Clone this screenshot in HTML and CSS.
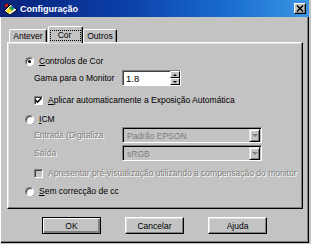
FILE: index.html
```html
<!DOCTYPE html>
<html lang="pt">
<head>
    <meta charset="UTF-8">
    <title>Configuração</title>
    <link rel="stylesheet" href="styles.css">
</head>
<body>
    <div class="window">
        <div class="titlebar">
            <svg class="app-icon" width="15" height="14" viewBox="0 0 15 14">
                <path d="M1 9 L8 2 L14 8 L7 13 Z" fill="#f4f4f4" stroke="#000" stroke-width="1"/>
                <path d="M3 9 L6 6 L9 9 L6 11 Z" fill="#ffd800"/>
                <path d="M6 6 L8 4 L11 7 L9 9 Z" fill="#2aa02a"/>
                <path d="M8 4 L9 3 L12 6 L11 7 Z" fill="#1040c0"/>
                <path d="M1 4 L4 1 L6 3 L3 6 Z" fill="#d02020" stroke="#000" stroke-width="0.6"/>
            </svg>
            <span class="title">Configuração</span>
            <span class="close">
                <svg width="8" height="7" viewBox="0 0 8 7"><path d="M1 0.5 L7 6.5 M7 0.5 L1 6.5" stroke="#000" stroke-width="1.6"/></svg>
            </span>
        </div>

        <div class="main">
            <div class="tabs">
                <div class="tab">Antever</div>
                <div class="tab active"><span class="focus">Cor</span></div>
                <div class="tab">Outros</div>
            </div>

            <div class="panel">
                <div class="row choice">
                    <span class="radio checked"></span>
                    <span><u>C</u>ontrolos de Cor</span>
                </div>
                <div class="row field gama">
                    <span class="label">Gama para o Monitor</span>
                    <div class="spin">
                        <span class="spin-value">1.8</span>
                        <div class="spin-buttons">
                            <span class="spin-btn"><i class="arrow up"></i></span>
                            <span class="spin-btn"><i class="arrow down"></i></span>
                        </div>
                    </div>
                </div>
                <div class="row field check-row">
                    <span class="check checked">
                        <svg width="7" height="7" viewBox="0 0 7 7"><path d="M0.5 3 L2.5 5.2 L6.5 1" fill="none" stroke="#000" stroke-width="1.5"/></svg>
                    </span>
                    <span><u>A</u>plicar automaticamente a Exposição Automática</span>
                </div>
                <div class="row choice icm">
                    <span class="radio"></span>
                    <span><u>I</u>CM</span>
                </div>
                <div class="row field combo-row first">
                    <span class="label disabled">Entrada (Digitaliza</span>
                    <div class="combo">
                        <span class="combo-value disabled-plain">Padrão EPSON</span>
                        <span class="combo-btn"><i class="arrow down grey"></i></span>
                    </div>
                </div>
                <div class="row field combo-row">
                    <span class="label disabled">Saída</span>
                    <div class="combo">
                        <span class="combo-value disabled-plain">sRGB</span>
                        <span class="combo-btn"><i class="arrow down grey"></i></span>
                    </div>
                </div>
                <div class="row field check-row preview">
                    <span class="check off"></span>
                    <span class="disabled nowrap">Apresentar pré-visualização utilizando a compensação do monitor</span>
                </div>
                <div class="row choice sem">
                    <span class="radio"></span>
                    <span><u>S</u>em correcção de cc</span>
                </div>
            </div>

            <div class="buttons">
                <button class="btn default">OK</button>
                <button class="btn">Cancelar</button>
                <button class="btn">Ajuda</button>
            </div>
        </div>
    </div>
</body>
</html>
```

FILE: styles.css
```css
body {
    margin: 0;
    background: #c3c3c3;
    font-family: "Liberation Sans", Arial, sans-serif;
    font-size: 8.5px;
    color: #000;
}

.window {
    width: 309px;
    height: 243px;
    background: #c3c3c3;
    box-shadow: inset 1px 0 #fff, inset -1px 0 #000, inset 0 -1px #000, inset -2px 0 #808080, inset 0 -2px #808080;
    overflow: hidden;
}

/* title bar */
.titlebar {
    height: 17px;
    display: flex;
    align-items: center;
    background: linear-gradient(to right, #08227a, #0b3fa8 40%, #1a6fd0 75%, #3c95e4);
    color: #fff;
}

.app-icon {
    margin-left: 3px;
    margin-right: 2px;
}

.title {
    font-weight: bold;
    font-size: 9px;
    flex: 1;
}

.close {
    width: 12px;
    height: 11px;
    box-sizing: border-box;
    margin-right: 3px;
    display: flex;
    align-items: center;
    justify-content: center;
    background: #c3c3c3;
    border: 1px solid;
    border-color: #fff #000 #000 #fff;
    box-shadow: inset -1px -1px #808080;
}

.main {
    padding: 9px 0 0 7px;
}

/* tabs */
.tabs {
    display: flex;
    align-items: flex-end;
    margin-left: 2px;
    height: 16px;
}

.tab {
    height: 13px;
    box-sizing: border-box;
    border: 1px solid;
    border-bottom: none;
    border-color: #fff #000 #000 #fff;
    border-radius: 2px 2px 0 0;
    box-shadow: inset -1px 0 #808080;
    display: flex;
    align-items: center;
    justify-content: center;
    width: 38px;
    line-height: 9px;
}

.tab + .tab {
    width: 34px;
}

.tab.active {
    width: 35px;
    height: 17px;
    margin: 0 0 -1px 1px;
    background: #c3c3c3;
    position: relative;
    z-index: 1;
}

.focus {
    border: 1px dotted #000;
    width: 31px;
    height: 11px;
    box-sizing: border-box;
    display: flex;
    align-items: center;
    justify-content: center;
    padding-right: 2px;
}

/* panel */
.panel {
    width: 296px;
    height: 167px;
    box-sizing: border-box;
    border: 1px solid;
    border-color: #fff #000 #000 #fff;
    box-shadow: inset -1px -1px #808080, inset 1px 1px #dfdfdf;
    padding-top: 11px;
}

.row {
    display: flex;
    align-items: center;
    height: 14px;
    white-space: nowrap;
}

.choice {
    padding-left: 17px;
}

.field {
    padding-left: 26px;
}

.gama {
    height: 16px;
    margin-top: 2px;
}

.check-row {
    margin-top: 7px;
}

.icm {
    margin-top: 5px;
}

.combo-row {
    height: 16px;
    margin-top: 2px;
}

.combo-row.first {
    margin-top: 1px;
}

.preview {
    margin-top: 5px;
}

.sem {
    margin-top: 4px;
}

.label {
    width: 88px;
}

.disabled {
    color: #808080;
    text-shadow: 1px 1px 0 #fff;
}

.disabled-plain {
    color: #808080;
}

/* radio and check */
.radio {
    width: 9px;
    height: 9px;
    box-sizing: border-box;
    border-radius: 50%;
    border: 1px solid;
    border-color: #808080 #fff #fff #808080;
    background: #fff;
    box-shadow: inset 1px 1px #404040;
    margin-right: 5px;
    display: flex;
    align-items: center;
    justify-content: center;
}

.radio.checked::after {
    content: "";
    width: 3px;
    height: 3px;
    border-radius: 50%;
    background: #000;
}

.check {
    width: 9px;
    height: 9px;
    box-sizing: border-box;
    border: 1px solid;
    border-color: #808080 #fff #fff #808080;
    box-shadow: inset 1px 1px #404040;
    background: #fff;
    margin-right: 5px;
    display: flex;
    align-items: center;
    justify-content: center;
}

.check.off {
    background: #c3c3c3;
}

/* spinner */
.spin {
    width: 59px;
    height: 16px;
    box-sizing: border-box;
    border: 1px solid;
    border-color: #808080 #fff #fff #808080;
    box-shadow: inset 1px 1px #404040;
    background: #fff;
    display: flex;
    align-items: center;
}

.spin-value {
    flex: 1;
    padding-left: 3px;
    font-size: 9.5px;
}

.spin-buttons {
    display: flex;
    flex-direction: column;
    width: 10px;
    height: 14px;
}

.spin-btn {
    flex: 1;
    box-sizing: border-box;
    background: #c3c3c3;
    border: 1px solid;
    border-color: #fff #000 #000 #fff;
    display: flex;
    align-items: center;
    justify-content: center;
}

.arrow {
    width: 0;
    height: 0;
    border-left: 2px solid transparent;
    border-right: 2px solid transparent;
}

.arrow.up {
    border-bottom: 2px solid #000;
}

.arrow.down {
    border-top: 2px solid #000;
}

.arrow.grey {
    border-top-color: #808080;
    border-left-width: 3px;
    border-right-width: 3px;
    border-top-width: 3px;
}

/* combo */
.combo {
    width: 140px;
    height: 16px;
    box-sizing: border-box;
    border: 1px solid;
    border-color: #808080 #fff #fff #808080;
    box-shadow: inset 1px 1px #000;
    display: flex;
    align-items: center;
    padding: 1px 1px 0 1px;
}

.combo-value {
    flex: 1;
    padding-left: 3px;
}

.combo-btn {
    width: 11px;
    height: 13px;
    box-sizing: border-box;
    border: 1px solid;
    border-color: #dfdfdf #000 #000 #dfdfdf;
    box-shadow: inset 1px 1px #fff, inset -1px -1px #808080;
    display: flex;
    align-items: center;
    justify-content: center;
}

/* buttons */
.buttons {
    display: flex;
    gap: 24px;
    margin: 8px 0 0 35px;
}

.btn {
    width: 59px;
    height: 17px;
    box-sizing: border-box;
    font-family: "Liberation Sans", Arial, sans-serif;
    font-size: 8.5px;
    background: #c3c3c3;
    border: 1px solid;
    border-color: #fff #000 #000 #fff;
    box-shadow: inset -1px -1px #808080, inset 1px 1px #dfdfdf;
    padding: 0;
}

.btn.default {
    border: 1px solid #000;
    box-shadow: inset 1px 1px #fff, inset -1px -1px #808080, inset -2px -2px #808080;
}
```
